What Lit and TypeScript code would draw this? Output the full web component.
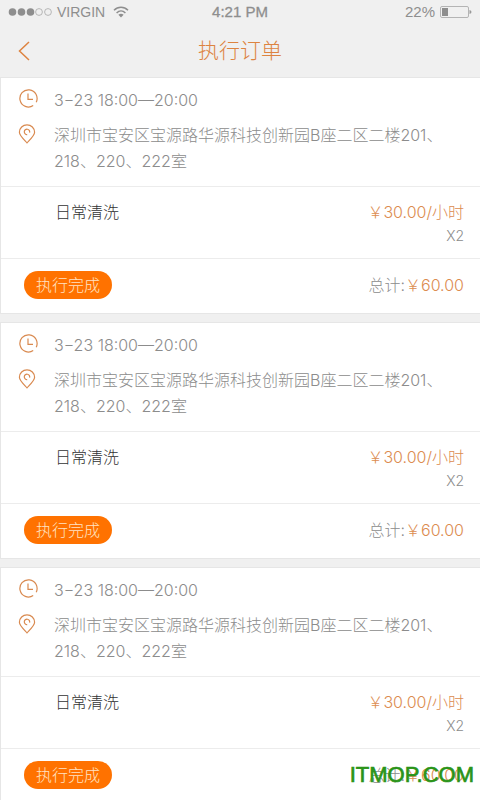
import { LitElement, html, css } from "lit";
import { customElement, property } from "lit/decorators.js";

interface Order {
  time: string;
  address: string;
  service: string;
  price: string;
  count: number;
  total: string;
}

const order: Order = {
  time: "3−23 18:00—20:00",
  address: "深圳市宝安区宝源路华源科技创新园B座二区二楼201、218、220、222室",
  service: "日常清洗",
  price: "￥30.00/小时",
  count: 2,
  total: "￥60.00",
};

const orders: Order[] = [order, order, order];

@customElement("status-bar")
export class StatusBar extends LitElement {
  static styles = css`
    :host {
      display: grid;
      grid-template-columns: 1fr auto 1fr;
      align-items: center;
      height: 24px;
      padding: 0 8px;
      color: #8e8e8e;
      font: 14px/24px "Liberation Sans", Arial, sans-serif;
    }
    .side {
      display: flex;
      align-items: center;
      gap: 5px;
    }
    .end {
      justify-content: flex-end;
      font-size: 15px;
    }
    .time {
      font-size: 15px;
      -webkit-text-stroke: 0.3px currentColor;
    }
    svg {
      display: block;
    }
  `;

  render() {
    return html`
      <div class="side">
        <svg width="44" height="10" viewBox="0 0 44 10" aria-hidden="true">
          <g fill="#8e8e8e">
            <circle cx="4.5" cy="5" r="3.8" />
            <circle cx="13.5" cy="5" r="3.8" />
            <circle cx="22.5" cy="5" r="3.8" />
          </g>
          <g fill="none" stroke="#a8a8a8" stroke-width="0.8">
            <circle cx="31" cy="5" r="3.4" />
            <circle cx="40" cy="5" r="3.4" />
          </g>
        </svg>
        <span>VIRGIN</span>
        <svg width="20" height="12" viewBox="0 0 20 12" aria-hidden="true">
          <g fill="none" stroke="#8e8e8e" stroke-width="1.5">
            <path d="M4 4.2C8 0.1 14 0.1 18 4.2" />
            <path d="M6.6 7C9.2 4.4 12.8 4.4 15.4 7" />
          </g>
          <path d="M8.4 8.8Q11 6.8 13.6 8.8L11 11.4Z" fill="#8e8e8e" />
        </svg>
      </div>
      <span class="time">4:21 PM</span>
      <div class="side end">
        <span>22%</span>
        <svg width="32" height="12" viewBox="0 0 32 12" aria-hidden="true">
          <rect x="0.5" y="0.5" width="28" height="11" rx="1.5" fill="none" stroke="#b4b4b4" />
          <rect x="2" y="2" width="6" height="8" fill="#8e8e8e" />
          <path d="M29.5 4Q31.5 4.5 31.5 6T29.5 8Z" fill="#999" />
        </svg>
      </div>
    `;
  }
}

@customElement("order-card")
export class OrderCard extends LitElement {
  @property({ attribute: false }) order!: Order;

  static styles = css`
    :host {
      display: block;
      background: #fff;
      border: 1px solid #e6e6e6;
      border-right: 0;
      color: #8c8c8c;
    }
    .info {
      display: grid;
      grid-template-columns: 36px 1fr;
      row-gap: 9px;
      padding: 9px 18px 12px 17px;
    }
    .info p {
      margin: 0;
      line-height: 26px;
    }
    .info svg {
      display: block;
      margin-top: 2px;
    }
    .item,
    .foot {
      display: flex;
      justify-content: space-between;
      border-top: 1px solid #ececec;
    }
    .item {
      padding: 13px 16px 10px 54px;
      line-height: 24px;
    }
    .name {
      color: #333;
    }
    .cost {
      text-align: right;
    }
    .price {
      color: #dc8c50;
    }
    .count {
      font-size: 14px;
    }
    .foot {
      align-items: center;
      padding: 12px 16px 14px 23px;
      line-height: 28px;
    }
    button {
      height: 28px;
      padding: 0 12px;
      border: 0;
      border-radius: 14px;
      background: #ff7200;
      color: #ffe3c4;
      font: inherit;
      line-height: 28px;
    }
  `;

  render() {
    const o = this.order;
    return html`
      <div class="info">
        <svg width="20" height="20" viewBox="0 0 20 20" fill="none" stroke="#d98a50" stroke-width="1.2" aria-hidden="true">
          <path d="M15.2 16.6A8.6 8.6 0 1 1 18.2 13.2" />
          <path d="M10 4.5V10.4H15" />
        </svg>
        <p>${o.time}</p>
        <svg width="20" height="20" viewBox="0 0 20 20" fill="none" stroke="#d98a50" stroke-width="1.2" aria-hidden="true">
          <path d="M9 18.8C6 15.6 1.4 11.4 1.4 8.2A7.6 7.4 0 0 1 16.6 8.2C16.6 11.4 12 15.6 9 18.8Z" />
          <path d="M9.2 10.6A2.7 2.7 0 1 1 11.6 8.6" />
        </svg>
        <p>${o.address}</p>
      </div>
      <div class="item">
        <span class="name">${o.service}</span>
        <div class="cost">
          <div class="price">${o.price}</div>
          <div class="count">X${o.count}</div>
        </div>
      </div>
      <div class="foot">
        <button type="button">执行完成</button>
        <span>总计:<span class="price">${o.total}</span></span>
      </div>
    `;
  }
}

@customElement("app-root")
export class AppRoot extends LitElement {
  static styles = css`
    :host {
      display: block;
      position: relative;
      height: 100vh;
      overflow: hidden;
      background: #f0f0f0;
      font: 300 16px/24px Inter, "Noto Sans CJK SC", sans-serif;
    }
    header {
      display: grid;
      grid-template-columns: 48px 1fr 48px;
      align-items: center;
      height: 53px;
    }
    .back {
      display: flex;
      align-items: center;
      justify-content: center;
      height: 44px;
      padding: 0;
      border: 0;
      background: none;
    }
    h1 {
      margin: 0;
      color: #dd8340;
      font-size: 21px;
      font-weight: 300;
      line-height: 32px;
      text-align: center;
    }
    main {
      display: grid;
      gap: 8px;
    }
    .mark {
      position: absolute;
      right: 6px;
      bottom: 13px;
      color: #2a9418;
      font: 400 22px/24px "Liberation Sans", Arial, sans-serif;
      -webkit-text-stroke: 0.7px currentColor;
    }
  `;

  render() {
    return html`
      <status-bar></status-bar>
      <header>
        <button class="back" type="button" aria-label="返回">
          <svg width="12" height="20" viewBox="0 0 12 20" fill="none" stroke="#dd8340" stroke-width="1.5" aria-hidden="true">
            <path d="M11 1L1.5 10L11 19" />
          </svg>
        </button>
        <h1>执行订单</h1>
      </header>
      <main>${orders.map((o) => html`<order-card .order=${o}></order-card>`)}</main>
      <div class="mark">ITMOP.COM</div>
    `;
  }
}
